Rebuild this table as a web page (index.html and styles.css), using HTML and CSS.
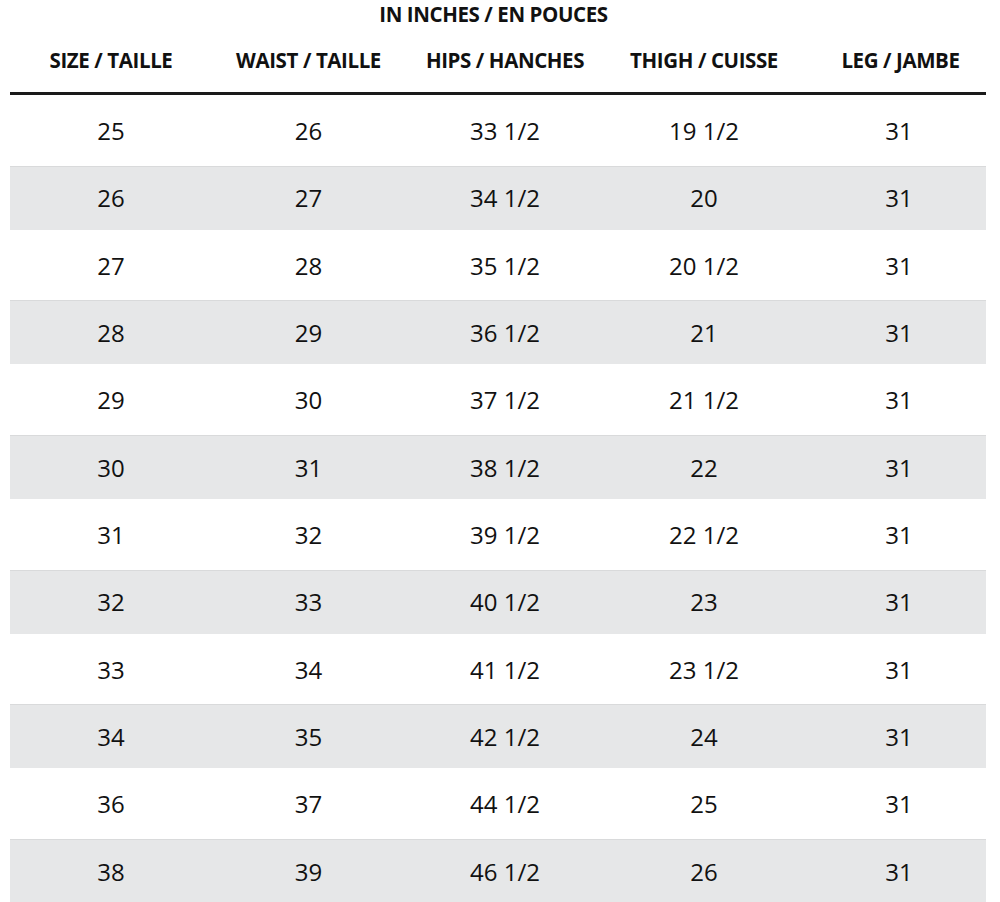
FILE: index.html
```html
<!DOCTYPE html>
<html lang="en">
<head>
<meta charset="utf-8">
<title>Size chart</title>
<link rel="stylesheet" href="styles.css">
</head>
<body>
<div class="chart">
  <div class="title">IN INCHES / EN POUCES</div>
  <div class="row head">
    <div>SIZE / TAILLE</div><div>WAIST / TAILLE</div><div>HIPS / HANCHES</div><div>THIGH / CUISSE</div><div>LEG / JAMBE</div>
  </div>
  <div class="row odd"><div>25</div><div>26</div><div>33 1/2</div><div>19 1/2</div><div>31</div></div>
  <div class="row even"><div>26</div><div>27</div><div>34 1/2</div><div>20</div><div>31</div></div>
  <div class="row odd"><div>27</div><div>28</div><div>35 1/2</div><div>20 1/2</div><div>31</div></div>
  <div class="row even"><div>28</div><div>29</div><div>36 1/2</div><div>21</div><div>31</div></div>
  <div class="row odd"><div>29</div><div>30</div><div>37 1/2</div><div>21 1/2</div><div>31</div></div>
  <div class="row even"><div>30</div><div>31</div><div>38 1/2</div><div>22</div><div>31</div></div>
  <div class="row odd"><div>31</div><div>32</div><div>39 1/2</div><div>22 1/2</div><div>31</div></div>
  <div class="row even"><div>32</div><div>33</div><div>40 1/2</div><div>23</div><div>31</div></div>
  <div class="row odd"><div>33</div><div>34</div><div>41 1/2</div><div>23 1/2</div><div>31</div></div>
  <div class="row even"><div>34</div><div>35</div><div>42 1/2</div><div>24</div><div>31</div></div>
  <div class="row odd"><div>36</div><div>37</div><div>44 1/2</div><div>25</div><div>31</div></div>
  <div class="row even"><div>38</div><div>39</div><div>46 1/2</div><div>26</div><div>31</div></div>
</div>
</body>
</html>
```

FILE: styles.css
```css
html, body {
  margin: 0;
  padding: 0;
  background: #ffffff;
}
body {
  font-family: "Open Sans", "Liberation Sans", sans-serif;
  color: #111111;
  overflow: hidden;
}
.chart {
  width: 976px;
  margin-left: 10px;
}
.title {
  height: 30px;
  line-height: 29px;
  text-align: center;
  font-weight: 700;
  font-size: 20.5px;
  letter-spacing: -0.4px;
  padding-right: 9px;
}
.row {
  display: grid;
  grid-template-columns: 202px 193px 200px 198px 183px;
  align-items: center;
  justify-items: center;
  font-size: 24px;
}
.row > div:nth-child(5) {
  margin-left: 9px;
}
.row.head {
  font-weight: 700;
  font-size: 20.5px;
  letter-spacing: -0.4px;
  border-bottom: 3px solid #1a1a1a;
  box-sizing: border-box;
  height: 65px;
  padding-bottom: 2px;
}
.row.head > div:nth-child(5) {
  margin-left: 12px;
}
.row.odd {
  height: 70.7px;
}
.row.even {
  height: 64px;
  background: #e6e7e8;
  box-shadow: inset 0 1px 0 #d9dadb;
}
```
